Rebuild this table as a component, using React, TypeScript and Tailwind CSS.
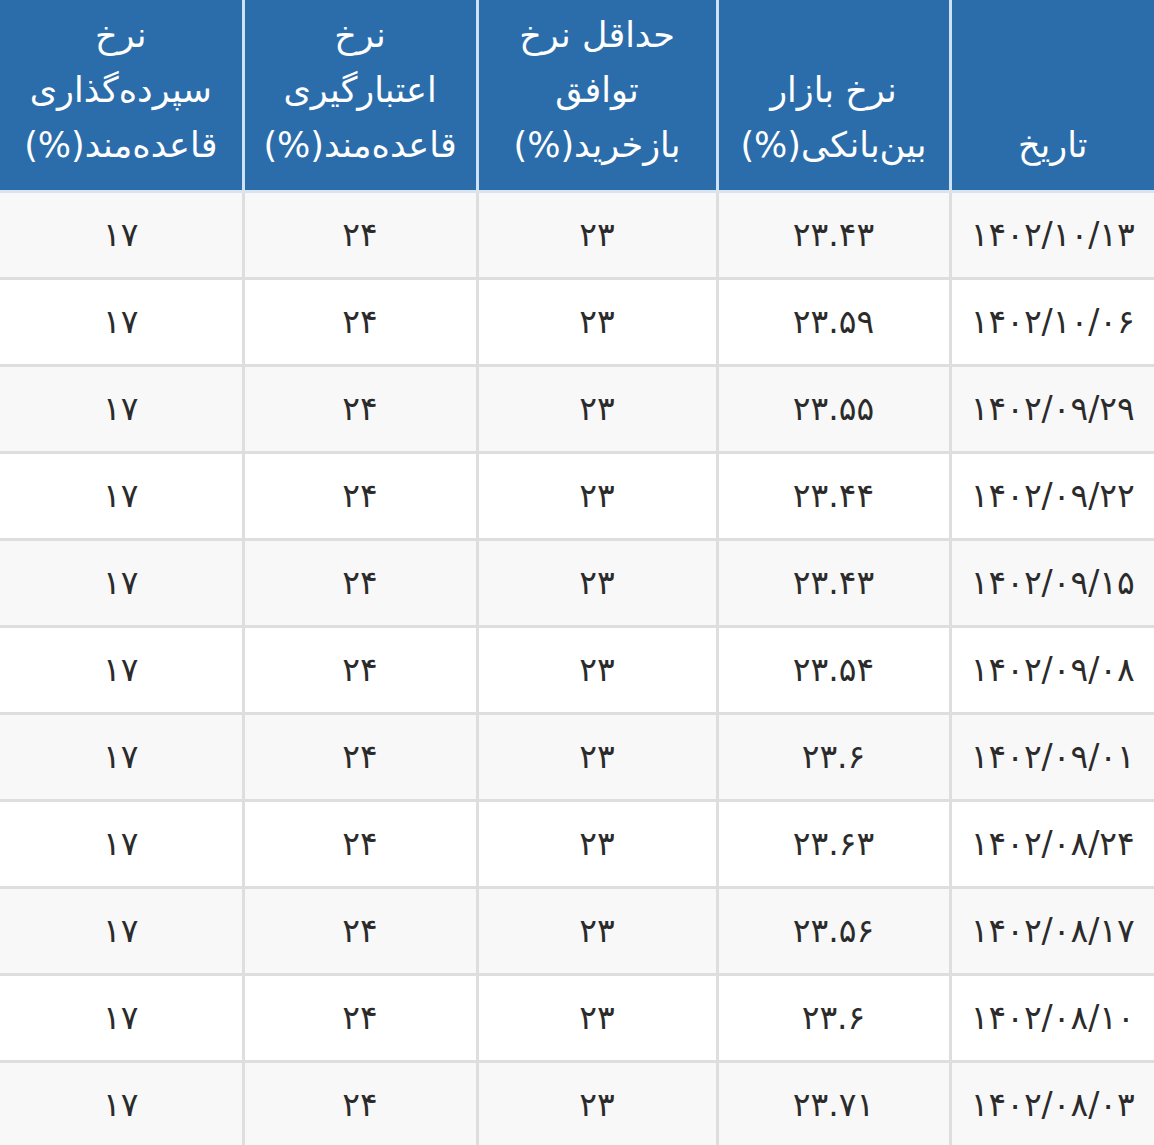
const headers = [
  ["تاریخ"],
  ["نرخ بازار", "بین‌بانکی(%)"],
  ["حداقل نرخ", "توافق", "بازخرید(%)"],
  ["نرخ", "اعتبارگیری", "قاعده‌مند(%)"],
  ["نرخ", "سپرده‌گذاری", "قاعده‌مند(%)"],
]

const rows = [
  ["۱۴۰۲/۱۰/۱۳", "۲۳.۴۳"],
  ["۱۴۰۲/۱۰/۰۶", "۲۳.۵۹"],
  ["۱۴۰۲/۰۹/۲۹", "۲۳.۵۵"],
  ["۱۴۰۲/۰۹/۲۲", "۲۳.۴۴"],
  ["۱۴۰۲/۰۹/۱۵", "۲۳.۴۳"],
  ["۱۴۰۲/۰۹/۰۸", "۲۳.۵۴"],
  ["۱۴۰۲/۰۹/۰۱", "۲۳.۶"],
  ["۱۴۰۲/۰۸/۲۴", "۲۳.۶۳"],
  ["۱۴۰۲/۰۸/۱۷", "۲۳.۵۶"],
  ["۱۴۰۲/۰۸/۱۰", "۲۳.۶"],
  ["۱۴۰۲/۰۸/۰۳", "۲۳.۷۱"],
]

export default function App() {
  return (
    <div dir="rtl" className="w-[1154px] bg-white font-['DejaVu_Sans',sans-serif]">
      <table className="w-full table-fixed border-collapse">
        <colgroup>
          <col className="w-[204px]" />
          <col className="w-[233px]" />
          <col className="w-[240px]" />
          <col className="w-[234px]" />
          <col className="w-[243px]" />
        </colgroup>
        <thead>
          <tr className="h-[191px]">
            {headers.map((lines, i) => (
              <th
                key={i}
                className="bg-[#2b6dab] align-bottom pb-[17px] text-[35px] font-normal leading-[55px] text-white border-l-[3px] border-l-[#cfe2f3] last:border-l-0 border-b-[3px] border-b-[#d9e4ee]"
              >
                {lines.map((l, j) => (
                  <div key={j} className="whitespace-nowrap">{l}</div>
                ))}
              </th>
            ))}
          </tr>
        </thead>
        <tbody>
          {rows.map(([date, rate], i) => (
            <tr key={i} className={i % 2 === 0 ? "h-[87px] bg-[#f8f8f8]" : "h-[87px] bg-white"}>
              {[date, rate, "۲۳", "۲۴", "۱۷"].map((v, j) => (
                <td
                  key={j}
                  className="text-center align-middle text-[33px] text-[#2b2b2b] border-b-[3px] border-b-[#dedede] border-l-[3px] border-l-[#dedede] last:border-l-0"
                >
                  {v}
                </td>
              ))}
            </tr>
          ))}
        </tbody>
      </table>
    </div>
  )
}
